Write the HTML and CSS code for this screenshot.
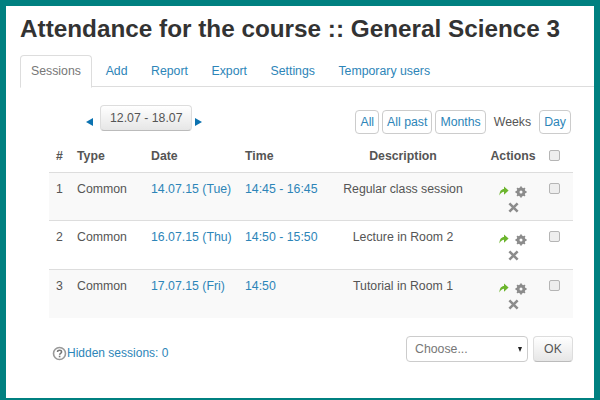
FILE: index.html
```html
<!DOCTYPE html>
<html lang="en">
<head>
    <meta charset="UTF-8">
    <title>Attendance for the course</title>
    <link rel="stylesheet" href="styles.css">
</head>
<body>
    <div class="page">
        <h1>Attendance for the course :: General Science 3</h1>

        <div class="tabs">
            <a class="tab active">Sessions</a>
            <a class="tab">Add</a>
            <a class="tab">Report</a>
            <a class="tab">Export</a>
            <a class="tab">Settings</a>
            <a class="tab">Temporary users</a>
        </div>

        <div class="controls">
            <div class="week-nav">
                <span class="arrow arrow-left"></span>
                <button class="btn">12.07 - 18.07</button>
                <span class="arrow arrow-right"></span>
            </div>
            <div class="views">
                <a class="view">All</a>
                <a class="view">All past</a>
                <a class="view">Months</a>
                <span class="view-current">Weeks</span>
                <a class="view">Day</a>
            </div>
        </div>

        <table class="sessions">
            <thead>
                <tr>
                    <th class="col-num">#</th>
                    <th class="col-type">Type</th>
                    <th class="col-date">Date</th>
                    <th class="col-time">Time</th>
                    <th class="col-desc">Description</th>
                    <th class="col-actions">Actions</th>
                    <th class="col-check"><span class="check"></span></th>
                </tr>
            </thead>
            <tbody>
                <tr>
                    <td>1</td>
                    <td>Common</td>
                    <td><a>14.07.15 (Tue)</a></td>
                    <td><a>14:45 - 16:45</a></td>
                    <td class="col-desc">Regular class session</td>
                    <td class="col-actions">
                        <div class="icons">
                            <svg width="10" height="10" viewBox="0 0 12 12"><path d="M.5 11.500C.5 6 3 3.500 6 3.500V.5L11.500 5.500L6 10.500V7C4 7 2 8.500 .5 11.500Z" fill="#6cb52d"/></svg>
                            <svg width="12" height="12" viewBox="0 0 12 12"><circle cx="6" cy="6" r="3.300" fill="none" stroke="#8c8c8c" stroke-width="2.400"/><path d="M6 .5V11.500M.5 6H11.500M2.100 2.100L9.900 9.900M9.900 2.100L2.100 9.900" stroke="#8c8c8c" stroke-width="1.800"/><circle cx="6" cy="6" r="1.500" fill="#f9f9f9"/></svg>
                            <svg class="icon-del" width="11" height="11" viewBox="0 0 12 12"><path d="M1.500 1.500L10.500 10.500M10.500 1.500L1.500 10.500" stroke="#8c8c8c" stroke-width="2.800"/></svg>
                        </div>
                    </td>
                    <td class="col-check"><span class="check"></span></td>
                </tr>
                <tr>
                    <td>2</td>
                    <td>Common</td>
                    <td><a>16.07.15 (Thu)</a></td>
                    <td><a>14:50 - 15:50</a></td>
                    <td class="col-desc">Lecture in Room 2</td>
                    <td class="col-actions">
                        <div class="icons">
                            <svg width="10" height="10" viewBox="0 0 12 12"><path d="M.5 11.500C.5 6 3 3.500 6 3.500V.5L11.500 5.500L6 10.500V7C4 7 2 8.500 .5 11.500Z" fill="#6cb52d"/></svg>
                            <svg width="12" height="12" viewBox="0 0 12 12"><circle cx="6" cy="6" r="3.300" fill="none" stroke="#8c8c8c" stroke-width="2.400"/><path d="M6 .5V11.500M.5 6H11.500M2.100 2.100L9.900 9.900M9.900 2.100L2.100 9.900" stroke="#8c8c8c" stroke-width="1.800"/><circle cx="6" cy="6" r="1.500" fill="#fff"/></svg>
                            <svg class="icon-del" width="11" height="11" viewBox="0 0 12 12"><path d="M1.500 1.500L10.500 10.500M10.500 1.500L1.500 10.500" stroke="#8c8c8c" stroke-width="2.800"/></svg>
                        </div>
                    </td>
                    <td class="col-check"><span class="check"></span></td>
                </tr>
                <tr>
                    <td>3</td>
                    <td>Common</td>
                    <td><a>17.07.15 (Fri)</a></td>
                    <td><a>14:50</a></td>
                    <td class="col-desc">Tutorial in Room 1</td>
                    <td class="col-actions">
                        <div class="icons">
                            <svg width="10" height="10" viewBox="0 0 12 12"><path d="M.5 11.500C.5 6 3 3.500 6 3.500V.5L11.500 5.500L6 10.500V7C4 7 2 8.500 .5 11.500Z" fill="#6cb52d"/></svg>
                            <svg width="12" height="12" viewBox="0 0 12 12"><circle cx="6" cy="6" r="3.300" fill="none" stroke="#8c8c8c" stroke-width="2.400"/><path d="M6 .5V11.500M.5 6H11.500M2.100 2.100L9.900 9.900M9.900 2.100L2.100 9.900" stroke="#8c8c8c" stroke-width="1.800"/><circle cx="6" cy="6" r="1.500" fill="#f9f9f9"/></svg>
                            <svg class="icon-del" width="11" height="11" viewBox="0 0 12 12"><path d="M1.500 1.500L10.500 10.500M10.500 1.500L1.500 10.500" stroke="#8c8c8c" stroke-width="2.800"/></svg>
                        </div>
                    </td>
                    <td class="col-check"><span class="check"></span></td>
                </tr>
            </tbody>
        </table>

        <div class="footer">
            <a class="hidden-link">
                <svg width="15" height="15" viewBox="0 0 15 15"><circle cx="7.500" cy="7.500" r="6" fill="#fff" stroke="#999" stroke-width="1.600"/><path d="M5.500 6C5.500 3.700 9.600 3.700 9.600 6C9.600 7.400 7.600 7.400 7.600 8.800" fill="none" stroke="#777" stroke-width="1.500"/><rect x="6.800" y="9.700" width="1.600" height="1.600" fill="#777"/></svg>Hidden sessions: 0
            </a>
            <div class="bulk">
                <div class="select">Choose...<span class="caret"></span></div>
                <button class="btn btn-ok">OK</button>
            </div>
        </div>
    </div>
</body>
</html>
```

FILE: styles.css
```css
body {
    margin: 0;
    padding: 6px 6px 2px 6px;
    height: 400px;
    box-sizing: border-box;
    background: #008080;
    font-family: "Liberation Sans", Arial, sans-serif;
    font-size: 12.300px;
    color: #555;
    overflow: hidden;
}

a {
    color: #2d85b8;
    text-decoration: none;
}

.page {
    background: white;
    height: 392px;
    padding: 0 21px 0 14px;
    box-sizing: border-box;
}

h1 {
    margin: 0;
    padding-top: 9px;
    font-size: 24.300px;
    line-height: 28px;
    font-weight: bold;
    color: #333;
    white-space: nowrap;
}

/* tabs */
.tabs {
    display: flex;
    margin-top: 12px;
    height: 31px;
    margin-right: -21px;
    border-bottom: 1px solid #ddd;
}

.tab {
    padding: 0 11.750px;
    line-height: 32px;
}

.tab.active {
    color: #777;
    background: white;
    border: 1px solid #ddd;
    border-bottom: 1px solid white;
    border-radius: 4px 4px 0 0;
    height: 31px;
    line-height: 31px;
    padding: 0 10px;
    margin-right: 2px;
}

/* week nav and view switch */
.controls {
    display: flex;
    justify-content: space-between;
    margin: 18px 0 0 66px;
    padding-right: 2px;
    height: 35px;
}

.week-nav {
    display: flex;
    align-items: center;
    height: 26px;
}

.arrow {
    width: 0;
    height: 0;
    border-top: 4px solid transparent;
    border-bottom: 4px solid transparent;
    margin-top: 8px;
}

.arrow-left {
    border-right: 7px solid #0b72b0;
    margin-right: 7px;
}

.arrow-right {
    border-left: 7px solid #0b72b0;
    margin-left: 3px;
}

.btn {
    font-family: inherit;
    font-size: 12.300px;
    color: #555;
    height: 26px;
    padding: 0 9px;
    border: 1px solid #ddd;
    border-bottom-color: #bbb;
    border-radius: 4px;
    background: linear-gradient(#fff, #e6e6e6);
}

.views {
    display: flex;
    align-items: center;
    height: 24px;
    margin-top: 5px;
    gap: 3px;
}

.view {
    padding: 0 4px;
    line-height: 22px;
    border: 1px solid #ccc;
    border-radius: 4px;
}

.view-current {
    padding: 0 5px;
    color: #555;
}

/* sessions table */
.sessions {
    width: 524px;
    margin: 0 0 0 29px;
    border-collapse: collapse;
    table-layout: fixed;
}

.sessions th {
    height: 32px;
    padding: 0;
    box-sizing: border-box;
    text-align: left;
    font-weight: bold;
    border-bottom: 1px solid #ddd;
}

.sessions td {
    height: 49px;
    padding: 7px 0 0 0;
    box-sizing: border-box;
    vertical-align: top;
    border-bottom: 1px solid #ddd;
    line-height: 18px;
}

.sessions tbody tr:first-child td {
    height: 48px;
}

.sessions tbody tr:nth-child(odd) td {
    background: #f9f9f9;
}

.sessions tbody tr:last-child td {
    border-bottom: none;
}

.sessions th:first-child, .sessions td:first-child {
    padding-left: 7px;
}

.col-num { width: 28px; }
.col-type { width: 74px; }
.col-date { width: 94px; }
.col-time { width: 78px; }
.col-desc { width: 160px; text-align: center !important; }
.col-actions { width: 60px; text-align: center !important; }
.col-check { width: 30px; }

.icons {
    width: 40px;
    margin: 6px auto 0 auto;
    display: flex;
    flex-wrap: wrap;
    justify-content: center;
    column-gap: 6px;
    row-gap: 4px;
}

.icon-del {
    margin: 0 10px;
}

.check {
    display: block;
    width: 9px;
    height: 9px;
    margin-left: 6px;
    border: 1px solid #b5b5b5;
    border-radius: 2px;
    background: #eee;
}

.sessions td .check {
    margin-top: 3px;
}

/* footer */
.footer {
    display: flex;
    justify-content: space-between;
    margin: 18px 0 0 32px;
}

.hidden-link {
    display: flex;
    align-items: center;
    height: 26px;
    margin-top: 4px;
    font-size: 12px;
}

.bulk {
    display: flex;
    gap: 5px;
}

.select {
    position: relative;
    width: 112px;
    height: 24px;
    padding-left: 8px;
    line-height: 24px;
    color: #777;
    border: 1px solid #ccc;
    border-radius: 4px;
    background: white;
}

.caret {
    position: absolute;
    right: 5px;
    top: 10px;
    border-top: 5px solid #222;
    border-left: 2.500px solid transparent;
    border-right: 2.500px solid transparent;
}

.btn-ok {
    width: 40px;
    padding: 0;
}
```
